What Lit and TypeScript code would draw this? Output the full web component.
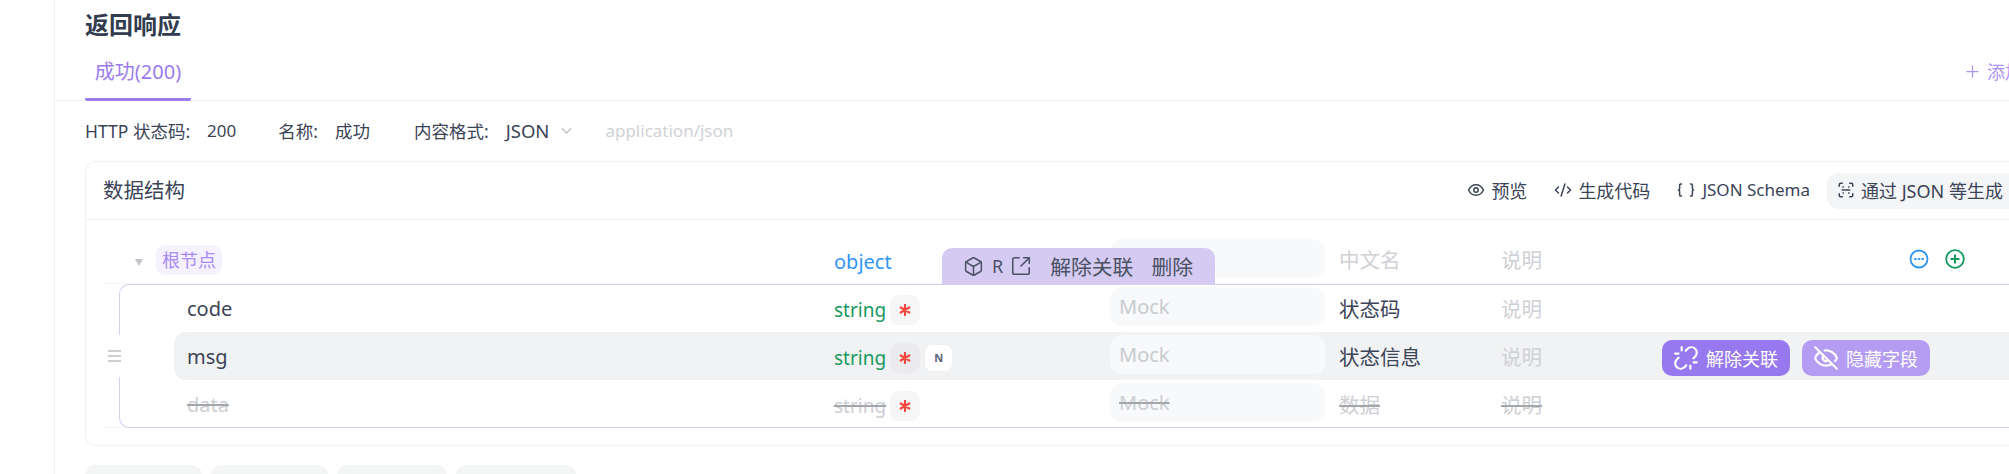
import { LitElement, html, css, svg } from "lit";
import { customElement } from "lit/decorators.js";

const ic = (body: unknown, cls = "") => html`<svg class="ic ${cls}" viewBox="0 0 24 24" fill="none" stroke="currentColor" stroke-width="2" stroke-linecap="round" stroke-linejoin="round">${body}</svg>`;

const eye = svg`<path d="M2 12s3.500-7 10-7 10 7 10 7-3.500 7-10 7-10-7-10-7Z"/><circle cx="12" cy="12" r="3"/>`;
const code = svg`<path d="m18 16 4-4-4-4"/><path d="m6 8-4 4 4 4"/><path d="m14.500 4-5 16"/>`;
const braces = svg`<path d="M6 4H5a1.500 1.500 0 0 0-1.500 1.500v4.500a2 2 0 0 1-1.500 2 2 2 0 0 1 1.500 2v4.500A1.500 1.500 0 0 0 5 20h1"/><path d="M18 20h1a1.500 1.500 0 0 0 1.500-1.500V14a2 2 0 0 1 1.500-2 2 2 0 0 1-1.500-2V5.500A1.500 1.500 0 0 0 19 4h-1"/>`;
const scan = svg`<path d="M3 7V5a2 2 0 0 1 2-2h2"/><path d="M17 3h2a2 2 0 0 1 2 2v2"/><path d="M21 17v2a2 2 0 0 1-2 2h-2"/><path d="M7 21H5a2 2 0 0 1-2-2v-2"/><path d="M8 8h.5M15.500 8h.5M7 12h10M8 16h.5M15.500 16h.5"/>`;
const box = svg`<path d="M21 8a2 2 0 0 0-1-1.730l-7-4a2 2 0 0 0-2 0l-7 4A2 2 0 0 0 3 8v8a2 2 0 0 0 1 1.730l7 4a2 2 0 0 0 2 0l7-4A2 2 0 0 0 21 16Z"/><path d="m3.300 7 8.700 5 8.700-5"/><path d="M12 22V12"/>`;
const ext = svg`<path d="M10 3H5a2 2 0 0 0-2 2v14a2 2 0 0 0 2 2h14a2 2 0 0 0 2-2v-5"/><path d="M15 3h6v6"/><path d="M21 3l-9 9"/>`;
const unlink = svg`<path d="m18.840 12.250 1.720-1.710h-.020a5.004 5.004 0 0 0-.120-7.070 5.006 5.006 0 0 0-6.950 0l-1.720 1.710"/><path d="m5.170 11.750-1.710 1.710a5.004 5.004 0 0 0 .120 7.070 5.006 5.006 0 0 0 6.950 0l1.710-1.710"/><path d="M8 2v3M2 8h3M16 19v3M19 16h3"/>`;
const eyeOff = svg`<path d="M10.733 5.076a10.744 10.744 0 0 1 11.205 6.575 1 1 0 0 1 0 .696 10.747 10.747 0 0 1-1.444 2.490"/><path d="M14.084 14.158a3 3 0 0 1-4.242-4.242"/><path d="M17.479 17.499a10.750 10.750 0 0 1-15.417-5.151 1 1 0 0 1 0-.696 10.750 10.750 0 0 1 4.446-5.143"/><path d="m2 2 20 20"/>`;
const star = html`<svg class="star" viewBox="0 0 12 12" stroke="currentColor" stroke-width="2.200" stroke-linecap="round"><path d="M6 1v10M1.700 3.500l8.600 5M10.300 3.500l-8.600 5"/></svg>`;

@customElement("app-root")
export class AppRoot extends LitElement {
  static styles = css`
    :host { display: block; width: 2009px; height: 474px; overflow: hidden; background: #fff; color: #3b4457;
      font-family: "Noto Sans", "Noto Sans CJK SC", sans-serif; font-size: 18px; }
    * { box-sizing: border-box; }
    .ic { width: 18px; height: 18px; flex: none; display: block; }
    .layout { display: flex; height: 474px; overflow: hidden; }
    .side { width: 55px; flex: none; border-right: 1px solid #f0f1f4; }
    .main { flex: 1; min-width: 0; overflow: hidden; }
    .title { height: 49px; line-height: 49px; padding-left: 30px; font-size: 24px; font-weight: 700; color: #333d50; }
    .tabs { height: 52px; border-bottom: 1px solid #f0f1f4; padding-left: 30px; display: flex; align-items: flex-start; justify-content: space-between; }
    .tab { width: 106px; height: 52px; border-bottom: 3px solid #9b7bee; border-radius: 2px; color: #9b7bee; font-size: 20px; text-align: center; line-height: 46px; }
    .add { display: flex; align-items: center; gap: 7px; color: #ab93f4; height: 44px; margin-right: -48px; width: 92px; white-space: nowrap; font-size: 18px; }
    .add .ic { width: 15px; height: 15px; }
    .meta { height: 60px; padding: 0 0 2px 30px; display: flex; align-items: center; font-size: 17.500px; white-space: nowrap; }
    .meta .k { margin-right: 17px; }
    .meta .v { margin-right: 44px; }
    .meta .mt { margin-right: 10px; font-size: 18.500px; }
    .meta .num { font-size: 17px; margin-right: 42px; }
    .chev { width: 15px; height: 15px; color: #b8bbc2; margin-right: 31px; }
    .mime { color: #d0d2d6; font-size: 17px; }
    .card { margin-left: 30px; width: 1937px; height: 285px; border: 1px solid #f0f1f4; border-radius: 10px; }
    .head { height: 58px; border-bottom: 1px solid #f0f1f4; padding-left: 17px; display: flex; align-items: center; justify-content: space-between; font-size: 18px; white-space: nowrap; }
    .head .h { font-size: 20.500px; margin-top: -4px; }
    .acts { display: flex; align-items: center; }
    .act { display: flex; align-items: center; gap: 6px; margin-right: 27px; padding-bottom: 2px; }
    .act.sch { margin-right: 17px; gap: 7px; font-size: 17px; }
    .act.gen { margin: 0; width: 194px; height: 36px; padding-left: 10px; gap: 6px; background: #f4f5f6; border-radius: 12px; }
    .tree { padding: 17px 0 0 16px; font-size: 20.500px; white-space: nowrap; }
    .root { position: relative; display: grid; grid-template-columns: 732px 276px 229px 162px 409px 1fr; height: 47px; border-bottom: 1px solid #f3f4f6; }
    .rname { display: flex; align-items: flex-start; padding: 8px 0 0 33px; }
    .tri { width: 0; height: 0; margin: 14px 13px 0 0; border-left: 4px solid transparent; border-right: 4px solid transparent; border-top: 7px solid #c2c4c9; }
    .rtag { width: 66px; height: 30px; background: #f5f1ff; border-radius: 9px; color: #a88cf5; font-size: 18px; line-height: 30px; text-align: center; }
    .obj { color: #2f96f5; font-size: 20px; line-height: 50px; }
    .mock { width: 215px; height: 39px; padding-left: 9px; line-height: 39px; background: #f8f9fb; border-radius: 12px; color: #c9cbcf; font-size: 20px; }
    .root .mock { margin-top: 2px; }
    .cell { line-height: 46px; }
    .ph { color: #cfd1d5; }
    .pop { position: absolute; left: 840px; bottom: -1px; width: 273px; height: 36px; padding-left: 21px; background: #d5cbf2; border-radius: 10px 10px 0 0; display: flex; align-items: center; color: #4a5264; font-size: 20.800px; }
    .pop .ic { width: 21px; height: 21px; stroke-width: 1.700; }
    .pop .r { font-size: 18px; margin: 0 7px 0 8px; }
    .pop .l { margin-left: 18px; }
    .pop .ic.e { width: 22px; height: 22px; }
    .ctrl { display: flex; align-items: flex-start; gap: 16px; padding-top: 12px; margin-left: -1px; }
    .circ { width: 20px; height: 20px; flex: none; }
    .more { color: #2f96f5; }
    .plus { color: #139a5e; }
    .wrap { position: relative; padding-left: 17px; border-bottom: 1px solid #f3f4f6; height: 144px; }
    .group { height: 144px; border: 1px solid #d6cff0; border-radius: 10px 0 0 10px; border-right: 0; }
    .row { display: grid; grid-template-columns: 660px 276px 229px 162px 161px 1fr; height: 48px; margin-left: 54px; }
    .row:first-child { margin-top: -1px; }
    .row.on { background: #f1f2f4; border-radius: 12px 0 0 12px; }
    .nm { padding-left: 13px; line-height: 50px; font-size: 20px; }
    .ty { display: flex; align-items: center; gap: 4px; }
    .str { color: #169a5f; font-size: 19px; line-height: 50px; }
    .req { width: 30px; height: 30px; border-radius: 9px; background: #f6f6f7; color: #f4483f; display: flex; align-items: center; justify-content: center; }
    .on .req { background: #ebebed; }
    .star { width: 12px; height: 12px; }
    .n { width: 29px; height: 28px; border-radius: 8px; background: #fff; border: 1px solid #f0f0f3; color: #5a6278; font-size: 11px; font-weight: 700; text-align: center; line-height: 26px; }
    .row .mock { margin-top: 3px; }
    .row .cell { line-height: 51px; }
    .off .nm, .off .str, .off .mock, .off .cell { color: #cdcfd3; text-decoration: line-through; text-decoration-color: #a3a6ab; text-decoration-thickness: 2px; }
    .btns { display: flex; align-items: center; gap: 12px; }
    .btn { width: 128px; height: 36px; flex: none; border-radius: 10px; background: #9878ee; color: #fff; display: flex; align-items: center; gap: 7px; padding-left: 11px; font-size: 18px; }
    .btn.h { background: #b39cf2; }
    .btn .ic { width: 26px; height: 26px; }
    .handle { position: absolute; left: 6px; top: 51px; width: 19px; height: 42px; background: #fff; display: flex; flex-direction: column; justify-content: center; gap: 3px; }
    .handle i { display: block; width: 13px; height: 2px; background: #cfcfd1; }
    .tags { display: flex; margin: 19px 0 0 30px; gap: 9px; }
    .tag { width: 117px; height: 40px; flex: none; border-radius: 10px; background: #f4f5f5; font-size: 18px; text-align: center; line-height: 36px; }
    .tag.c { width: 110px; }
    .tag.d { width: 120px; }
  `;

  render() {
    const row = (name: string, cn: string, cls: string, n = false, btns = false) => html`
      <div class="row ${cls}">
        <div class="nm">${name}</div>
        <div class="ty"><span class="str">string</span><span class="req">${star}</span>${n ? html`<span class="n">N</span>` : ""}</div>
        <div><div class="mock">Mock</div></div>
        <div class="cell">${cn}</div>
        <div class="cell ph">说明</div>
        <div class="btns">${btns ? html`
          <div class="btn">${ic(unlink)}解除关联</div>
          <div class="btn h">${ic(eyeOff)}隐藏字段</div>` : ""}</div>
      </div>`;
    return html`
      <div class="layout">
        <div class="side"></div>
        <div class="main">
          <div class="title">返回响应</div>
          <div class="tabs">
            <div class="tab">成功(200)</div>
            <div class="add">${ic(svg`<path d="M12 3v18M3 12h18"/>`)}添加</div>
          </div>
          <div class="meta">
            <span class="k">HTTP 状态码:</span><span class="num">200</span>
            <span class="k">名称:</span><span class="v">成功</span>
            <span class="k">内容格式:</span><span class="mt">JSON</span>
            ${ic(svg`<path d="m5 9 7 7 7-7"/>`, "chev")}
            <span class="mime">application/json</span>
          </div>
          <div class="card">
            <div class="head">
              <span class="h">数据结构</span>
              <div class="acts">
                <div class="act">${ic(eye)}预览</div>
                <div class="act">${ic(code)}生成代码</div>
                <div class="act sch">${ic(braces)}JSON Schema</div>
                <div class="act gen">${ic(scan)}通过 JSON 等生成</div>
              </div>
            </div>
            <div class="tree">
              <div class="root">
                <div class="rname"><span class="tri"></span><span class="rtag">根节点</span></div>
                <div class="obj">object</div>
                <div><div class="mock"></div></div>
                <div class="cell ph">中文名</div>
                <div class="cell ph">说明</div>
                <div class="ctrl">
                  <svg class="circ more" viewBox="0 0 20 20" fill="none" stroke="currentColor" stroke-width="1.800"><circle cx="10" cy="10" r="8.500"/><path d="M6 10h.8M9.600 10h.8M13.200 10h.8" stroke-width="2" stroke-linecap="round"/></svg>
                  <svg class="circ plus" viewBox="0 0 20 20" fill="none" stroke="currentColor" stroke-width="1.800"><circle cx="10" cy="10" r="8.800"/><path d="M10 5.500v9M5.500 10h9" stroke-width="2"/></svg>
                </div>
                <div class="pop">
                  ${ic(box)}<span class="r">R</span>${ic(ext, "e")}
                  <span class="l">解除关联</span><span class="l">删除</span>
                </div>
              </div>
              <div class="wrap">
                <div class="group">
                  ${row("code", "状态码", "")}
                  ${row("msg", "状态信息", "on", true, true)}
                  ${row("data", "数据", "off")}
                </div>
                <div class="handle"><i></i><i></i><i></i></div>
              </div>
            </div>
          </div>
          <div class="tags">
            <div class="tag">添加示例</div>
            <div class="tag">生成示例</div>
            <div class="tag c">引用模型</div>
            <div class="tag d">公共响应</div>
          </div>
        </div>
      </div>
    `;
  }
}
